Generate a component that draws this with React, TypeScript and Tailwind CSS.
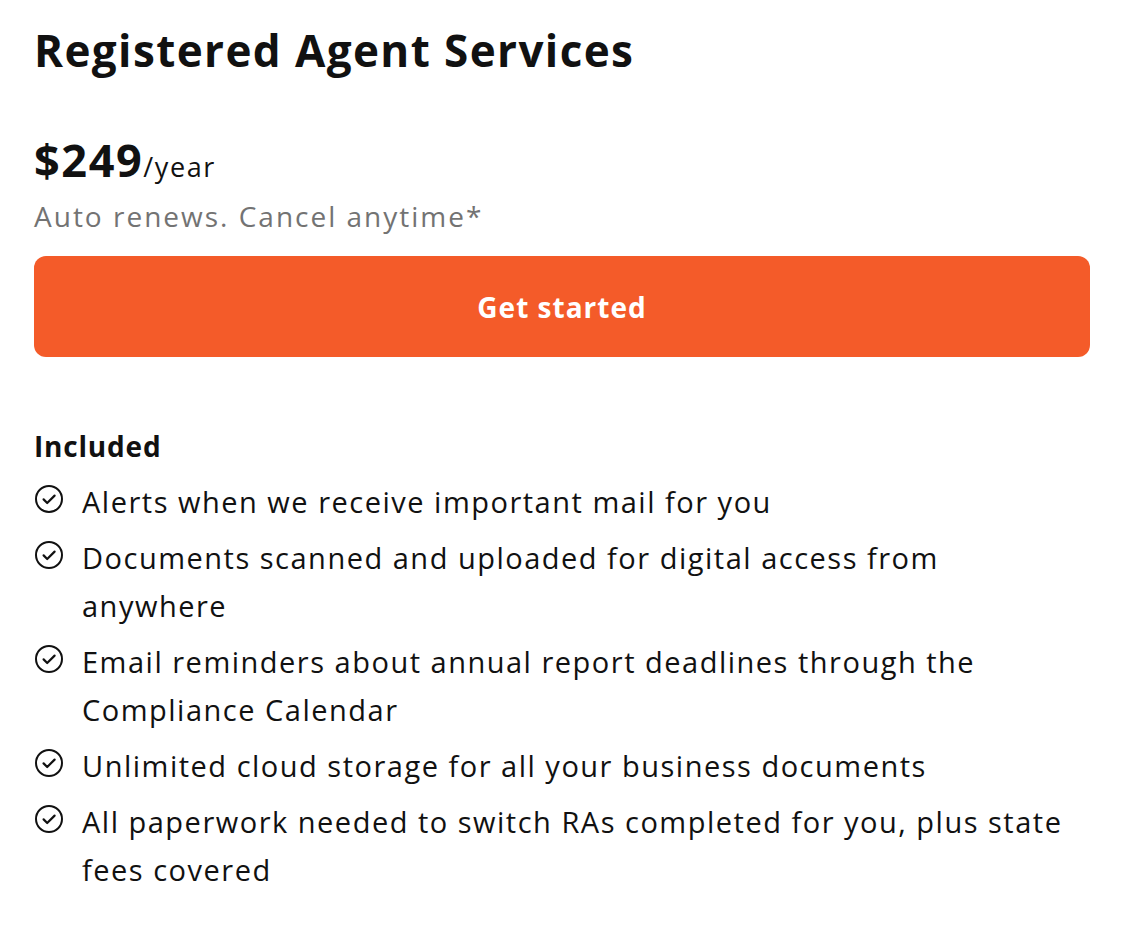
import React from "react";

const items = [
  "Alerts when we receive important mail for you",
  "Documents scanned and uploaded for digital access from anywhere",
  "Email reminders about annual report deadlines through the Compliance Calendar",
  "Unlimited cloud storage for all your business documents",
  "All paperwork needed to switch RAs completed for you, plus state fees covered",
];

const CheckIcon = () => (
  <svg width="28" height="28" viewBox="0 0 28 28" fill="none" className="shrink-0">
    <circle cx="14" cy="14" r="13" stroke="#111" strokeWidth="2" />
    <path d="M8.6 14.4l3.6 3.6L19.6 10.6" stroke="#111" strokeWidth="2.2" strokeLinecap="round" strokeLinejoin="round" />
  </svg>
);

const App: React.FC = () => {
  return (
    <div className="min-h-[936px] bg-white px-[34px] pt-[22px] text-[#111] font-['Open_Sans',sans-serif]">
      <h1 className="text-[44px] font-bold leading-[56px] tracking-[1.4px]">
        Registered Agent Services
      </h1>

      {/* Price */}
      <div className="mt-[57px] flex items-baseline">
        <span className="text-[45px] font-bold leading-[50px] tracking-[1.6px]">$249</span>
        <span className="text-[27px] leading-[50px] tracking-[1.6px]">/year</span>
      </div>
      <p className="mt-[7px] text-[28px] leading-[34px] tracking-[2px] text-[#737373]">
        Auto renews. Cancel anytime*
      </p>

      <button className="mt-[23px] flex h-[101px] w-full items-center justify-center rounded-[12px] bg-[#f45b29] text-[28px] font-bold tracking-[1px] text-white">
        Get started
      </button>

      {/* Included list */}
      <div className="mt-[69px]">
        <h2 className="text-[28px] font-bold leading-[40px] tracking-[0.8px]">Included</h2>
        <ul className="mt-[12px] flex flex-col gap-[8px]">
          {items.map((t) => (
            <li key={t} className="flex items-start gap-[19px]">
              <div className="flex h-[42px] items-center pl-[1px]">
                <CheckIcon />
              </div>
              <span className="text-[29px] leading-[48px] tracking-[1.5px]">{t}</span>
            </li>
          ))}
        </ul>
      </div>
    </div>
  );
};

export default App;
